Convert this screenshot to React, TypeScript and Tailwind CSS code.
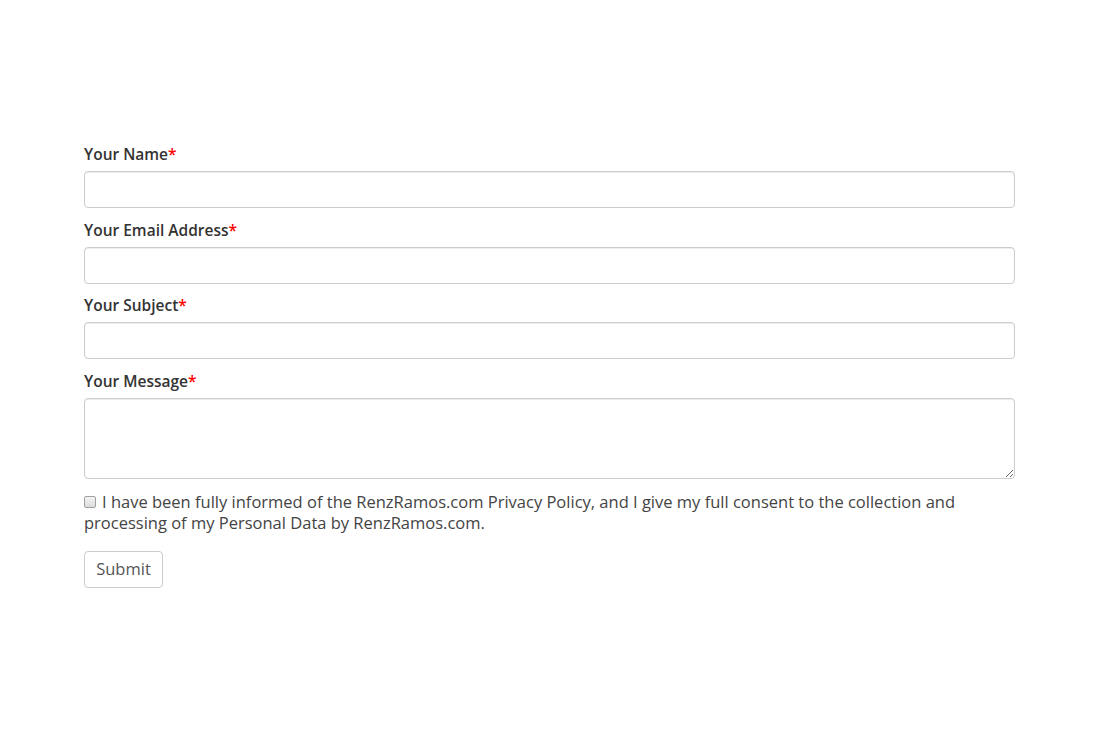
export default function App() {
  const fields = [
    { label: 'Your Name', type: 'text' },
    { label: 'Your Email Address', type: 'email' },
    { label: 'Your Subject', type: 'text' },
  ]

  return (
    <div className="min-h-screen bg-white pt-[143px] font-['Open_Sans',sans-serif] text-[#333]">
      <form className="mx-[84px] w-[931px]">
        {fields.map((f) => (
          <div key={f.label} className="mb-[10.5px]">
            <label className="block text-[15.5px] font-semibold leading-[22px] mb-[6px]">
              {f.label}
              <span className="text-[#ff0000]">*</span>
            </label>
            <input
              type={f.type}
              className="block w-full h-[37px] rounded-[4px] border border-[#ccc] bg-white px-3 shadow-[inset_0_1px_1px_rgba(0,0,0,0.075)] outline-none"
            />
          </div>
        ))}
        <div className="mb-[12px]">
          <label className="block text-[15.5px] font-semibold leading-[22px] mb-[6px]">
            Your Message<span className="text-[#ff0000]">*</span>
          </label>
          <textarea className="block w-full h-[81px] rounded-[4px] border border-[#ccc] bg-white px-3 py-1 shadow-[inset_0_1px_1px_rgba(0,0,0,0.075)] outline-none" />
        </div>
        <p className="text-[16.5px] leading-[21px] text-[#444]">
          <input
            type="checkbox"
            className="appearance-none inline-block w-[12px] h-[12px] align-[0px] mr-[6px] rounded-[2px] border border-[#a0a0a0] bg-gradient-to-b from-[#f4f4f4] to-[#dcdcdc]"
          />
          I have been fully informed of the RenzRamos.com Privacy Policy, and I give my full consent to the collection and processing of my Personal Data by RenzRamos.com.
        </p>
        <button
          type="button"
          className="mt-[18px] h-[37px] w-[79px] rounded-[4px] border border-[#ccc] bg-white text-[16.5px] text-[#555]"
        >
          Submit
        </button>
      </form>
    </div>
  )
}
